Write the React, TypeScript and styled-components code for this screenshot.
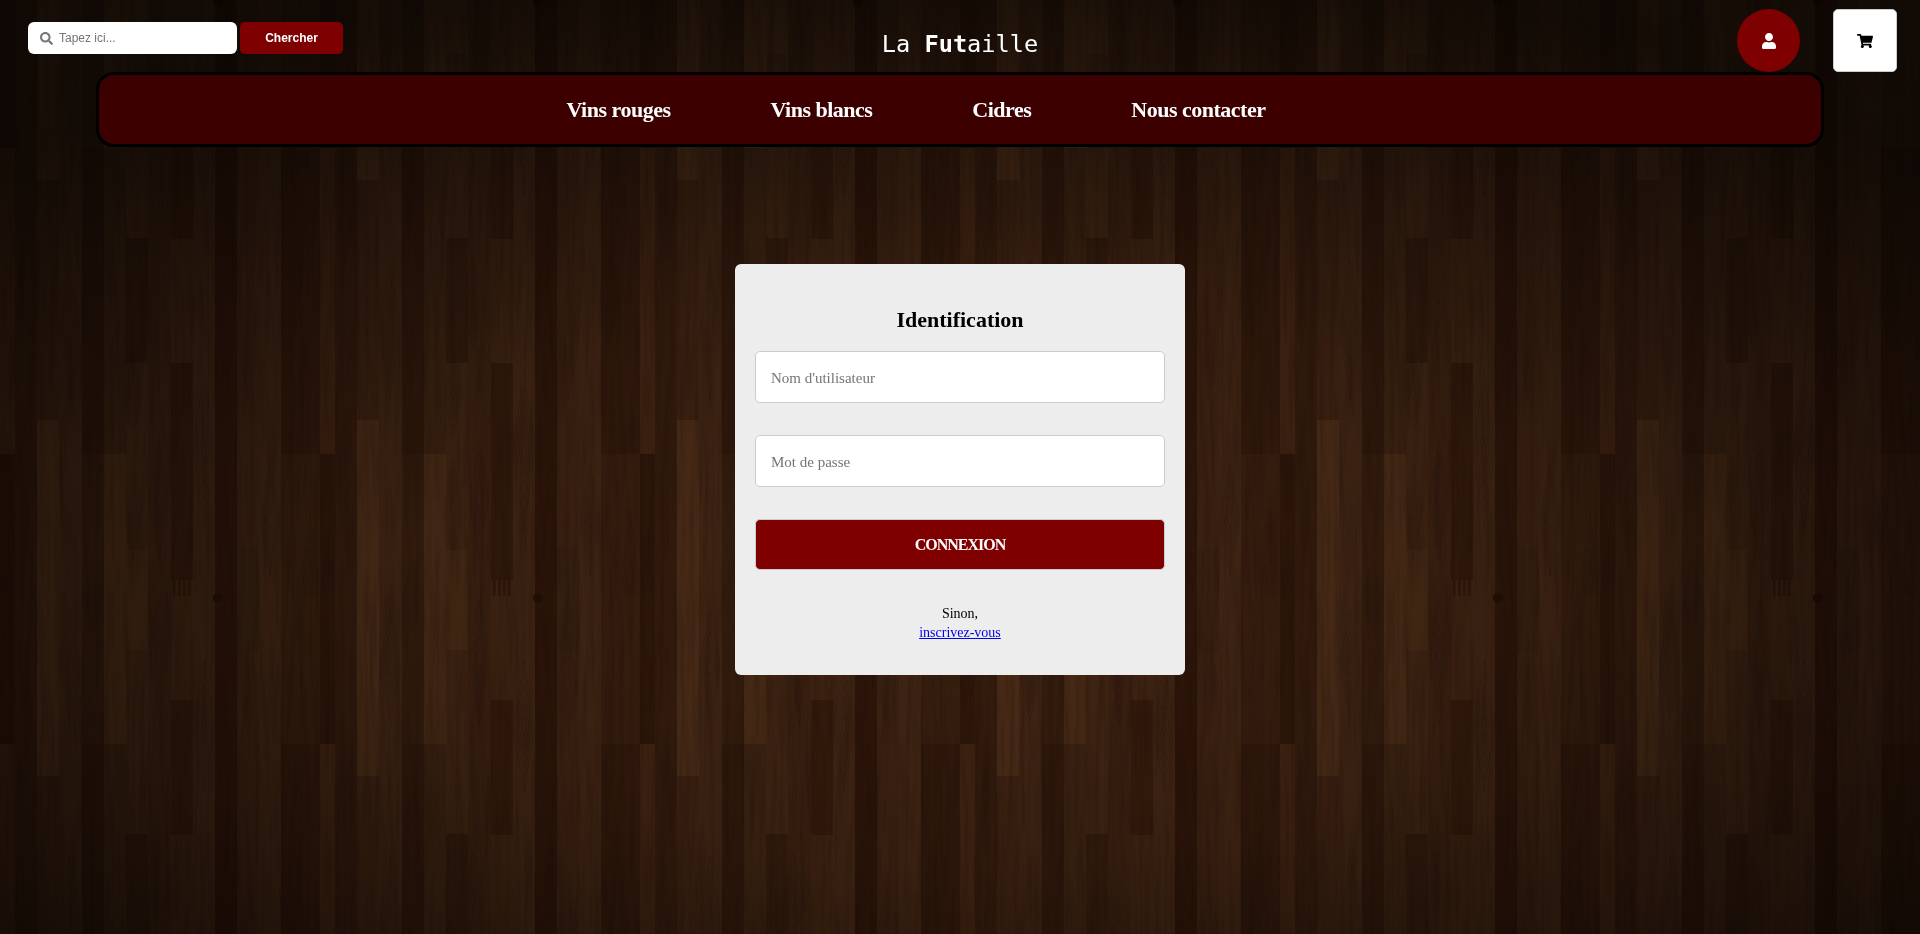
import React from "react"
import styled, { createGlobalStyle } from "styled-components"
import { FaSearch, FaShoppingCart, FaUser } from "react-icons/fa"

const TILE_W = 320
const TILE_H = 596

// each plank: x, width, base colour, then patches [from y, to y, colour]
type Plank = { x: number; w: number; c: string; p?: [number, number, string][] }

const planks: Plank[] = [
  { x: 0, w: 15, c: "#412412", p: [[454, 744, "#2f170a"]] },
  { x: 15, w: 22, c: "#351c0e" },
  { x: 37, w: 22, c: "#3d2212", p: [[420, 776, "#4a2c17"]] },
  { x: 59, w: 23, c: "#402514" },
  { x: 82, w: 22, c: "#31190c", p: [[454, 744, "#351d0e"]] },
  { x: 104, w: 22, c: "#3c2312", p: [[454, 744, "#482b16"]] },
  {
    x: 126,
    w: 22,
    c: "#402513",
    p: [
      [238, 363, "#341c0e"],
      [550, 650, "#462a15"],
    ],
  },
  { x: 148, w: 23, c: "#3b2111" },
  {
    x: 171,
    w: 22,
    c: "#3f2412",
    p: [
      [363, 580, "#331a0c"],
      [700, 835, "#351b0c"],
    ],
  },
  { x: 193, w: 22, c: "#402514" },
  { x: 215, w: 22, c: "#2e160a" },
  { x: 237, w: 22, c: "#3d2212", p: [[547, 652, "#382111"]] },
  { x: 259, w: 22, c: "#402514" },
  { x: 281, w: 22, c: "#31190b", p: [[454, 744, "#371e0f"]] },
  { x: 303, w: 17, c: "#331a0d", p: [[454, 744, "#381f0f"]] },
]

// ring groups in the grain: centre x, centre y, half width, half height
const knots: [number, number, number, number][] = [
  [93, 2, 10, 34],
  [93, 596, 10, 34],
  [290, 299, 10, 48],
  [153, 303, 11, 46],
  [159, 500, 9, 60],
  [159, 60, 9, 70],
  [133, 393, 9, 44],
  [133, 510, 9, 50],
  [70, 330, 10, 70],
  [70, 70, 10, 56],
  [204, 450, 10, 80],
  [204, 130, 10, 66],
  [26, 480, 10, 70],
  [26, 200, 10, 60],
  [248, 340, 10, 60],
  [248, 90, 10, 50],
  [270, 520, 9, 56],
  [8, 590, 6, 60],
  [310, 580, 8, 70],
]

const ogive = (x: number, y: number, rx: number, ry: number) =>
  `M${x} ${y - ry}C${x + rx * 0.5} ${y - ry * 0.45} ${x + rx} ${y - ry * 0.2} ${x + rx} ${y}` +
  `C${x + rx} ${y + ry * 0.2} ${x + rx * 0.5} ${y + ry * 0.45} ${x} ${y + ry}` +
  `C${x - rx * 0.5} ${y + ry * 0.45} ${x - rx} ${y + ry * 0.2} ${x - rx} ${y}` +
  `C${x - rx} ${y - ry * 0.2} ${x - rx * 0.5} ${y - ry * 0.45} ${x} ${y - ry}Z`

const GlobalStyle = createGlobalStyle`
  html {
    background: #1a0c06;
  }
  body {
    margin: 0;
    padding: 0;
  }
  * {
    box-sizing: border-box;
  }
`

const Floor = styled.svg`
  position: fixed;
  top: 0;
  left: 0;
  width: 100%;
  height: 100%;
  z-index: -1;
`

const WoodFloor = () => (
  <Floor viewBox="0 0 1920 934" preserveAspectRatio="none">
    <defs>
      <pattern id="planks" width={TILE_W} height={TILE_H} patternUnits="userSpaceOnUse">
        {planks.map(pl => (
          <g key={pl.x}>
            <rect x={pl.x} y={0} width={pl.w} height={TILE_H} fill={pl.c} />
            {pl.p?.map(([from, to, c]) => (
              <g key={from} fill={c}>
                <rect x={pl.x} y={from} width={pl.w} height={to - from} />
                <rect x={pl.x} y={from - TILE_H} width={pl.w} height={to - from} />
              </g>
            ))}
          </g>
        ))}
        {/* striped inlay and small dark knot */}
        {[0, 1, 2, 3].map(i => (
          <rect key={i} x={173 + i * 5} y={579} width={2.5} height={38} fill="#2a1408" opacity={0.7} />
        ))}
        <circle cx={218} cy={598} r={5} fill="#241006" />
        <circle cx={218} cy={2} r={5} fill="#241006" />
        <g fill="none" stroke="#1c0b04" strokeOpacity={0.24} strokeWidth={1}>
          {knots.map(([x, y, rx, ry], i) =>
            [1, 0.8, 0.62, 0.45, 0.3, 0.16].map(k => (
              <path key={`${i}-${k}`} d={ogive(x, y, rx * k, ry * k)} />
            ))
          )}
        </g>
      </pattern>
      <filter id="grain" x="0" y="0" width="100%" height="100%" colorInterpolationFilters="sRGB">
        <feTurbulence type="fractalNoise" baseFrequency="0.2 0.012" numOctaves={3} seed={4} />
        <feColorMatrix values="0 0 0 0 0.1  0 0 0 0 0.04  0 0 0 0 0.02  1.8 0 0 0 -0.7" />
      </filter>
      <radialGradient
        id="light"
        gradientUnits="userSpaceOnUse"
        cx={0}
        cy={0}
        r={1}
        gradientTransform="translate(960 580) scale(1250 640)"
      >
        <stop offset="0" stopColor="#000" stopOpacity={0} />
        <stop offset="0.45" stopColor="#000" stopOpacity={0.12} />
        <stop offset="0.75" stopColor="#000" stopOpacity={0.42} />
        <stop offset="1" stopColor="#000" stopOpacity={0.68} />
      </radialGradient>
    </defs>
    <rect width={1920} height={934} fill="url(#planks)" />
    <rect width={1920} height={934} filter="url(#grain)" opacity={0.3} />
    <rect width={1920} height={934} fill="url(#light)" />
  </Floor>
)

const Header = styled.header`
  display: grid;
  grid-template-columns: 1fr auto 1fr;
  height: 72px;
`

const SearchForm = styled.form`
  display: flex;
  gap: 3px;
  padding: 22px 0 0 28px;
`

const SearchBox = styled.label`
  display: flex;
  align-items: center;
  gap: 6px;
  width: 209px;
  height: 32px;
  padding-left: 12px;
  background: #fff;
  border-radius: 6px;
  color: #777;
  font-size: 13px;
`

const SearchInput = styled.input`
  flex: 1;
  min-width: 0;
  border: 0;
  outline: 0;
  padding: 0;
  background: transparent;
  font: 12px "Liberation Sans", Arial, sans-serif;

  &::placeholder {
    color: #757575;
  }
`

const SearchButton = styled.button`
  width: 103px;
  height: 32px;
  border: 0;
  border-radius: 5px;
  background: #7f0000;
  color: #fff;
  font: bold 12px "Liberation Sans", Arial, sans-serif;
`

const Title = styled.h1`
  margin: 0;
  padding-top: 29px;
  color: #fff;
  font: normal 23.6px/30px "DejaVu Sans Mono", "Liberation Mono", monospace;
`

const Account = styled.div`
  display: flex;
  justify-content: flex-end;
  gap: 33px;
  padding: 9px 23px 0 0;
`

const RoundButton = styled.button`
  display: flex;
  align-items: center;
  justify-content: center;
  width: 63px;
  height: 63px;
  padding: 0;
  border: 0;
  border-radius: 50%;
  background: #7f0000;
  color: #fff;
  font-size: 16px;
`

const CartButton = styled.button`
  display: flex;
  align-items: center;
  justify-content: center;
  width: 64px;
  height: 63px;
  padding: 0;
  border: 1px solid #ccc;
  border-radius: 5px;
  background: #fff;
  color: #000;
  font-size: 16px;
`

const Nav = styled.nav`
  display: flex;
  justify-content: center;
  align-items: center;
  gap: 100px;
  width: 90%;
  height: 75px;
  margin: 0 auto;
  padding-right: 88px;
  background: #3d0000;
  border: 3px solid #000;
  border-radius: 18px;
`

const NavLink = styled.a`
  color: #fff;
  font: bold 22px "Liberation Serif", "Times New Roman", serif;
  letter-spacing: -0.5px;
  text-decoration: none;
`

const Main = styled.main`
  display: flex;
  justify-content: center;
  padding-top: 117px;
`

const Card = styled.form`
  display: flex;
  flex-direction: column;
  width: 450px;
  height: 411px;
  padding: 42px 20px 0;
  background: #ededed;
  border-radius: 6px;
  font-family: "Liberation Serif", "Times New Roman", serif;
`

const CardTitle = styled.h2`
  margin: 0 0 17px;
  color: #000;
  font-size: 22px;
  line-height: 28px;
  text-align: center;
`

const Field = styled.input`
  height: 52px;
  margin-bottom: 32px;
  padding: 2px 15px 0;
  background: #fff;
  border: 1px solid #ccc;
  border-radius: 5px;
  outline: 0;
  font: 15px "Liberation Serif", "Times New Roman", serif;

  &::placeholder {
    color: #757575;
  }
`

const Submit = styled.button`
  height: 51px;
  margin-bottom: 34px;
  padding-top: 2px;
  background: #7f0000;
  border: 1px solid #ccc;
  border-radius: 5px;
  color: #fff;
  font: bold 16px "Liberation Serif", "Times New Roman", serif;
  letter-spacing: -1px;
`

const Footnote = styled.p`
  margin: 0;
  color: #000;
  font-size: 14px;
  line-height: 19px;
  text-align: center;
`

const SignUp = styled.a`
  color: #0000ee;
  text-decoration: underline;
`

const links = ["Vins rouges", "Vins blancs", "Cidres", "Nous contacter"]

export default function App() {
  return (
    <>
      <GlobalStyle />
      <WoodFloor />
      <Header>
        <SearchForm>
          <SearchBox>
            <FaSearch />
            <SearchInput placeholder="Tapez ici..." />
          </SearchBox>
          <SearchButton type="button">Chercher</SearchButton>
        </SearchForm>
        <Title>
          La <b>Fut</b>aille
        </Title>
        <Account>
          <RoundButton type="button" aria-label="Compte">
            <FaUser />
          </RoundButton>
          <CartButton type="button" aria-label="Panier">
            <FaShoppingCart />
          </CartButton>
        </Account>
      </Header>
      <Nav>
        {links.map(l => (
          <NavLink key={l} href="#">
            {l}
          </NavLink>
        ))}
      </Nav>
      <Main>
        <Card>
          <CardTitle>Identification</CardTitle>
          <Field placeholder="Nom d'utilisateur" />
          <Field type="password" placeholder="Mot de passe" />
          <Submit type="button">CONNEXION</Submit>
          <Footnote>
            Sinon,
            <br />
            <SignUp href="#">inscrivez-vous</SignUp>
          </Footnote>
        </Card>
      </Main>
    </>
  )
}
